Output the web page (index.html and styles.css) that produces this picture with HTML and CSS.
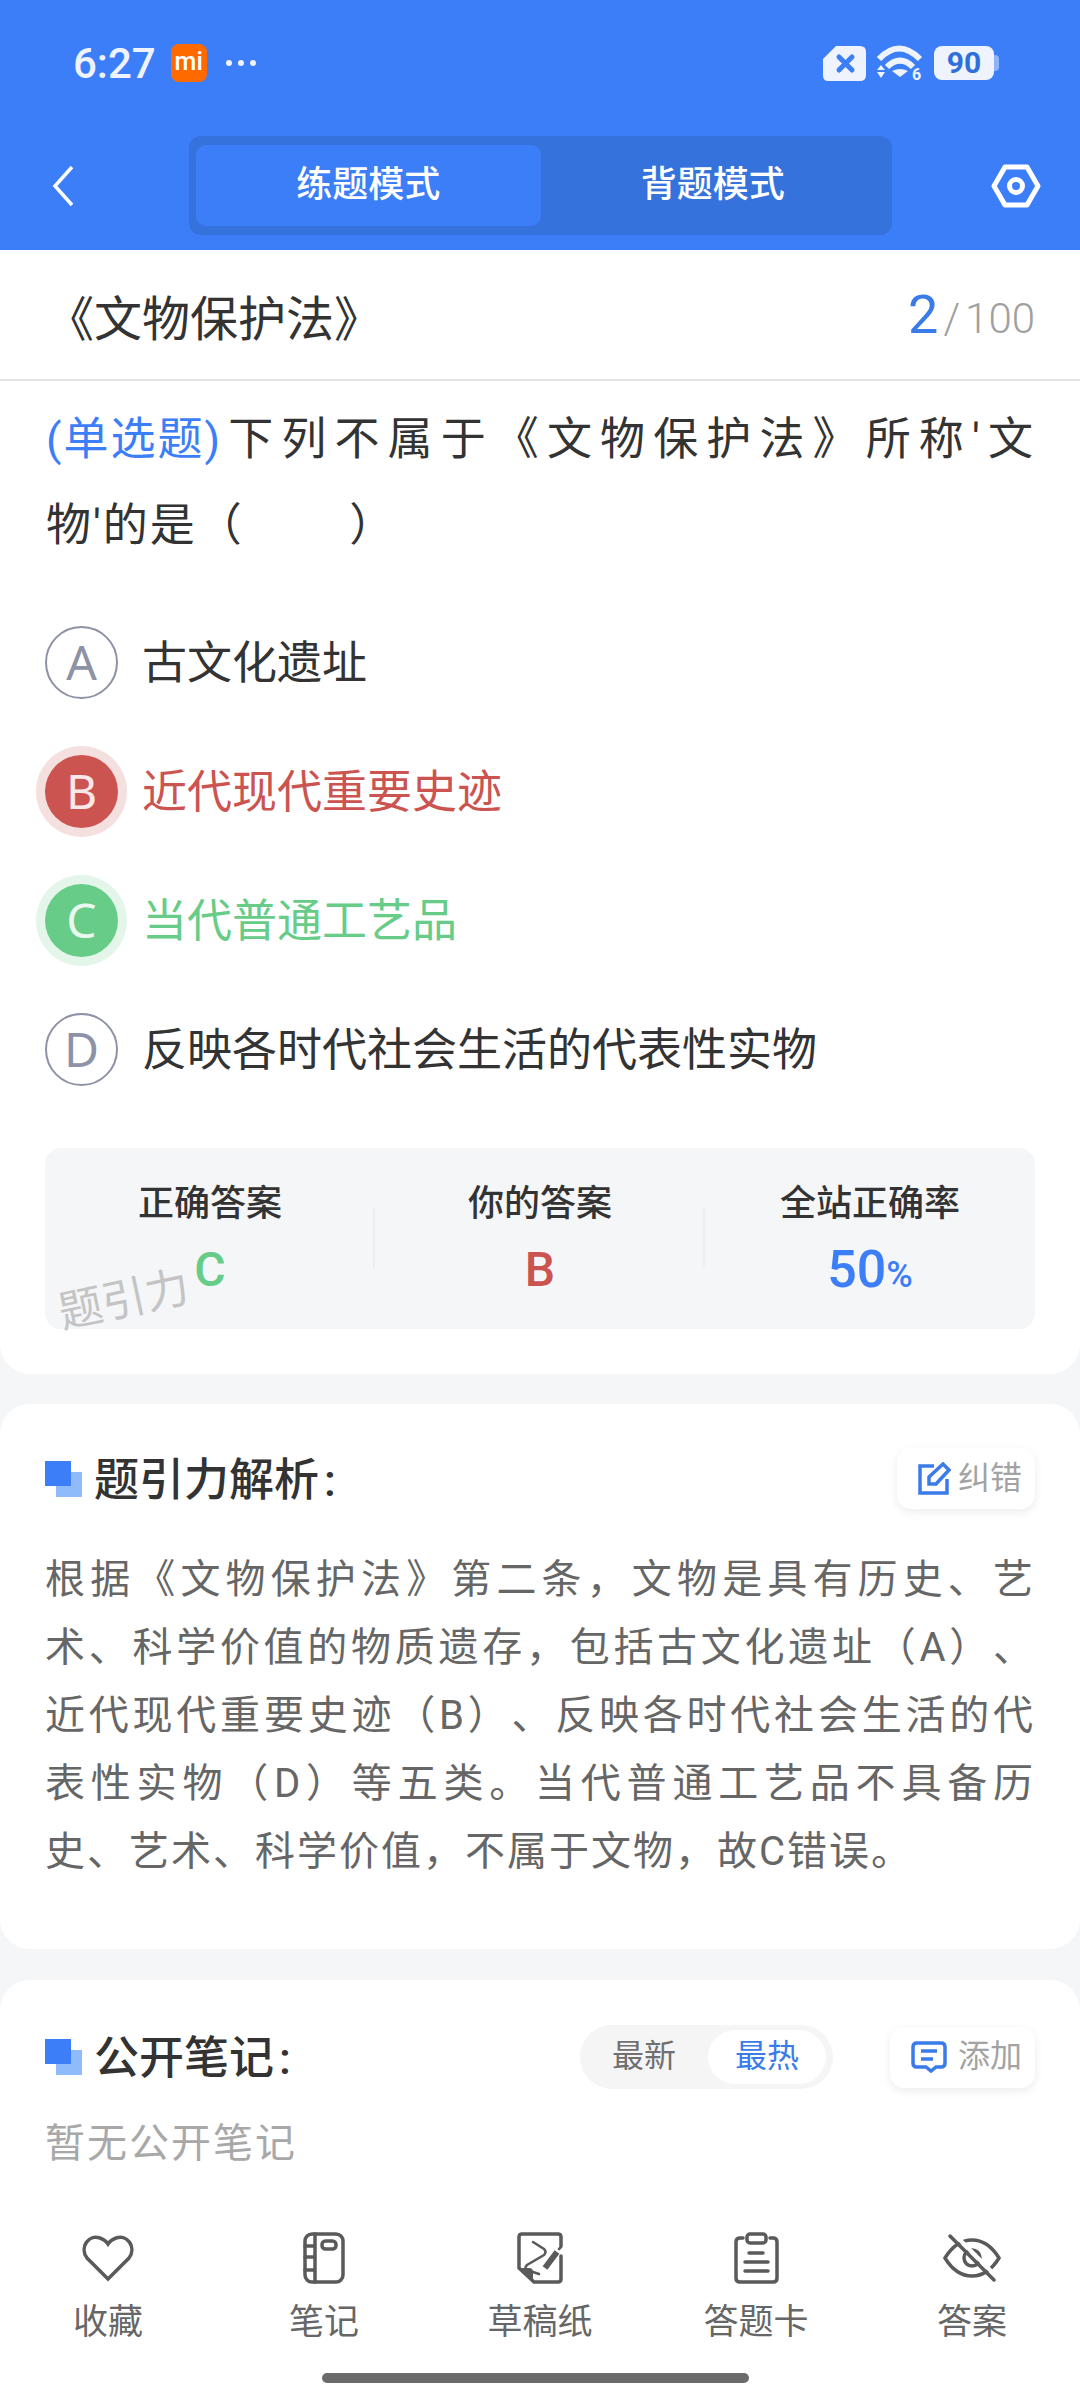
FILE: index.html
```html
<!DOCTYPE html>
<html lang="zh-CN">
<head>
	<meta charset="UTF-8">
	<title>练题模式</title>
	<link rel="stylesheet" href="styles.css">
</head>
<body>
	<header class="top">
		<div class="status">
			<div class="status_left">
				<span class="time">6:27</span>
				<span class="mi">mi</span>
				<svg class="dots" width="32" height="8" viewBox="0 0 32 8"><circle cx="4" cy="4" r="3"/><circle cx="16" cy="4" r="3"/><circle cx="28" cy="4" r="3"/></svg>
			</div>
			<div class="status_right">
				<svg width="43" height="35" viewBox="0 0 43 35"><path class="s_white" d="M13 0H37Q43 0 43 6V29Q43 35 37 35H5Q0 35 0 29V13Z"/><path class="s_x" d="M16 11L29 24M29 11L16 24"/></svg>
				<svg width="48" height="43" viewBox="0 -2 48 43"><path class="s_arc" d="M3 15Q23 -6 44 15"/><path class="s_arc" d="M11 23Q24 10 37 23"/><path class="s_fill" d="M16 27Q24 23 32 27L24 33Z"/><path class="s_fill" d="M1 26H9L5 21ZM1 28H9L5 34Z"/><text class="s_six" x="36" y="36">6</text></svg>
				<div class="battery"><span class="battery_num">90</span></div>
			</div>
		</div>
		<nav class="nav">
			<svg class="back" width="22" height="42" viewBox="0 0 22 42"><path d="M20 2L3 21L20 40"/></svg>
			<div class="mode">
				<span class="mode_item on">练题模式</span>
				<span class="mode_item">背题模式</span>
			</div>
			<svg class="hex" width="50" height="44" viewBox="0 0 50 44"><path d="M14 3H36L47 22L36 41H14L3 22Z"/><circle cx="25" cy="22" r="6.5"/></svg>
		</nav>
	</header>

	<section class="card first">
		<div class="title_row">
			<h1 class="book">《文物保护法》</h1>
			<div class="count"><b>2</b><i>/</i><span>100</span></div>
		</div>
		<p class="question"><span class="qtype">(单选题)</span>下列不属于《文物保护法》所称'文物'的是（&nbsp;&nbsp;&nbsp;&nbsp;&nbsp;&nbsp;&nbsp;&nbsp;）</p>
		<ul class="options">
			<li class="opt"><span class="letter">A</span><span class="opt_text">古文化遗址</span></li>
			<li class="opt wrong"><span class="letter">B</span><span class="opt_text">近代现代重要史迹</span></li>
			<li class="opt right"><span class="letter">C</span><span class="opt_text">当代普通工艺品</span></li>
			<li class="opt"><span class="letter">D</span><span class="opt_text">反映各时代社会生活的代表性实物</span></li>
		</ul>
		<div class="stats">
			<div class="stat"><span class="stat_label">正确答案</span><span class="stat_val green">C</span></div>
			<div class="stat"><span class="stat_label">你的答案</span><span class="stat_val red">B</span></div>
			<div class="stat"><span class="stat_label">全站正确率</span><span class="stat_val blue">50<small>%</small></span></div>
			<span class="mark">题引力</span>
		</div>
	</section>

	<section class="card second">
		<div class="card_head">
			<h2 class="head"><span class="head_icon"></span><span class="head_text">题引力解析<span class="colon">:</span></span></h2>
			<div class="btn">
				<svg width="33" height="33" viewBox="0 0 33 33"><path d="M16 4H2V31H29V17"/><path d="M11 22V15L25 2L31 8L18 22Z"/></svg>
				<span class="btn_text">纠错</span>
			</div>
		</div>
		<p class="analysis">根据《文物保护法》第二条，文物是具有历史、艺术、科学价值的物质遗存，包括古文化遗址（A）、近代现代重要史迹（B）、反映各时代社会生活的代表性实物（D）等五类。当代普通工艺品不具备历史、艺术、科学价值，不属于文物，故C错误。</p>
	</section>

	<section class="card third">
		<div class="card_head">
			<h2 class="head"><span class="head_icon"></span><span class="head_text">公开笔记<span class="colon">:</span></span></h2>
			<div class="head_right">
				<div class="sort"><span class="sort_item">最新</span><span class="sort_item on">最热</span></div>
				<div class="btn btn_add">
					<svg width="36" height="32" viewBox="0 0 36 32"><path d="M6 2H30Q34 2 34 6V22Q34 26 30 26H25L20 30L15 26H6Q2 26 2 22V6Q2 2 6 2Z"/><path d="M10 10H26M10 18H22"/></svg>
					<span class="btn_text">添加</span>
				</div>
			</div>
		</div>
		<p class="empty">暂无公开笔记</p>
	</section>

	<footer class="bottom">
		<ul class="tabs">
			<li class="tab">
				<svg width="52" height="46" viewBox="0 0 52 46"><path d="M26 44L5 23C-3 12 7 -1 18 3C21 4 24 6 26 9C28 6 31 4 34 3C45 -1 55 12 47 23Z"/></svg>
				<span>收藏</span>
			</li>
			<li class="tab">
				<svg width="42" height="52" viewBox="0 0 42 52"><rect x="2" y="2" width="38" height="48" rx="7"/><path d="M12 2V50M2 14H12M2 25H12M2 38H12"/><rect x="19" y="9" width="14" height="8" rx="3.5"/></svg>
				<span>笔记</span>
			</li>
			<li class="tab">
				<svg width="46" height="52" viewBox="0 0 46 52"><path d="M44 14V5Q44 2 41 2H5Q2 2 2 5V36L17 50H41Q44 50 44 47V24"/><path class="solid" d="M2 36H12Q16 36 16 40V50Z"/><path class="thin" d="M16 10L27 17Q30 20 27 23L10 33Q7 36 10 38L22 42"/><path class="pen" d="M28 36L40 20"/><path class="thin" d="M42 17L44 15"/></svg>
				<span>草稿纸</span>
			</li>
			<li class="tab">
				<svg width="45" height="52" viewBox="0 0 45 52"><path d="M9 6H6Q2 6 2 10V46Q2 50 6 50H39Q43 50 43 46V10Q43 6 39 6H36"/><rect x="13" y="2" width="19" height="9" rx="3"/><path d="M15 21H29M11 30H34M11 39H34"/></svg>
				<span>答题卡</span>
			</li>
			<li class="tab">
				<svg width="58" height="48" viewBox="0 0 58 48"><path d="M2 24Q13 6 29 6Q45 6 56 24Q45 42 29 42Q13 42 2 24Z"/><circle cx="29" cy="24" r="8"/><path class="gap" d="M12 1L54 43"/><path d="M7 2L51 46"/></svg>
				<span>答案</span>
			</li>
		</ul>
		<div class="home_bar"></div>
	</footer>
</body>
</html>
```

FILE: styles.css
```css
*{
	margin: 0;
	padding: 0;
	box-sizing: border-box;
}
ul{
	list-style-type: none;
}
body{
	width: 1080px;
	height: 2400px;
	display: flex;
	flex-direction: column;
	overflow: hidden;
	background: #f5f6f8;
	color: #333;
	font-family: Roboto, "Noto Sans CJK SC", sans-serif;
	text-spacing-trim: space-all;
}

/* top blue area */
.top{
	height: 250px;
	flex: none;
	background: #3c7ef8;
}
.status{
	height: 126px;
	display: flex;
	align-items: center;
	justify-content: space-between;
	padding: 0 86px 0 73px;
}
.status_left,.status_right{
	display: flex;
	align-items: center;
}
.time{
	font-size: 42px;
	font-weight: 500;
	color: #eef3fe;
}
.mi{
	width: 36px;
	height: 38px;
	margin-left: 15px;
	border-radius: 8px;
	background: #ff6a00;
	color: #fff;
	font-size: 25px;
	font-weight: 500;
	line-height: 36px;
	text-align: center;
}
.dots{
	margin-left: 18px;
	fill: #eef3fe;
}
.status_right{
	gap: 10px;
}
.s_white{
	fill: #eef3fe;
}
.s_x{
	fill: none;
	stroke: #3c7ef8;
	stroke-width: 5;
	stroke-linecap: round;
}
.s_arc{
	fill: none;
	stroke: #eef3fe;
	stroke-width: 6;
}
.s_fill{
	fill: #eef3fe;
}
.s_six{
	fill: #eef3fe;
	font-size: 16px;
	font-weight: 700;
}
.battery{
	position: relative;
	width: 60px;
	height: 34px;
	border-radius: 8px;
	background: #eef3fe;
	color: #2f6fdc;
	font-size: 30px;
	font-weight: 700;
	line-height: 34px;
	text-align: center;
}
.battery:after{
	content: "";
	position: absolute;
	right: -5px;
	top: 9px;
	width: 5px;
	height: 16px;
	border-radius: 0 4px 4px 0;
	background: #8db4fb;
}
.nav{
	height: 99px;
	margin-top: 10px;
	display: flex;
	align-items: center;
	padding: 0 39px 0 52px;
}
.back path{
	fill: none;
	stroke: #fff;
	stroke-width: 3.5;
}
.hex{
	margin-left: auto;
}
.hex path,.hex circle{
	fill: none;
	stroke: #fff;
	stroke-width: 5;
	stroke-linejoin: round;
}
.mode{
	width: 703px;
	height: 99px;
	margin-left: 115px;
	padding: 9px 7px;
	display: flex;
	border-radius: 12px;
	background: #3672dc;
}
.mode_item{
	flex: 1;
	border-radius: 10px;
	color: #fff;
	font-size: 36px;
	font-weight: 500;
	line-height: 81px;
	text-align: center;
}
.mode_item.on{
	background: #3c7ef8;
}

/* cards */
.card{
	flex: none;
	background: #fff;
}
.first{
	padding-bottom: 45px;
	border-radius: 0 0 30px 30px;
}
.second{
	margin-top: 30px;
	padding: 44px 45px 63px 45px;
	border-radius: 30px;
}
.third{
	flex: 1;
	margin-top: 31px;
	padding: 45px 45px 0 45px;
	border-radius: 30px 30px 0 0;
}
.title_row{
	height: 131px;
	display: flex;
	align-items: center;
	justify-content: space-between;
	padding: 0 45px 0 46px;
	border-bottom: 2px solid #e2e2e2;
}
.book{
	font-size: 48px;
	font-weight: 400;
}
.count{
	display: flex;
	align-items: baseline;
	color: #a0a0a0;
	font-size: 42px;
	font-weight: 300;
}
.count b{
	color: #3a7bea;
	font-size: 54px;
	font-weight: 400;
}
.count i{
	margin: 0 5px;
	font-style: normal;
}
.question{
	padding: 16px 45px 0 46px;
	font-size: 45px;
	letter-spacing: 2px;
	line-height: 86px;
	text-align: justify;
}
.qtype{
	display: inline-block;
	color: #3c7ef8;
}
.options{
	margin-top: 29px;
	padding-left: 45px;
}
.opt{
	height: 129px;
	display: flex;
	align-items: center;
	gap: 24px;
	font-size: 45px;
}
.opt_text{
	margin-top: -6px;
}
.letter{
	width: 73px;
	height: 73px;
	flex: none;
	border: 2px solid #8e92a6;
	border-radius: 50%;
	color: #8e92a6;
	font-family: "Noto Sans", sans-serif;
	font-size: 48px;
	line-height: 68px;
	text-align: center;
}
.wrong{
	color: #cb5450;
}
.wrong .letter{
	border: none;
	background: #cb5450;
	box-shadow: 0 0 0 9px #f5e0e0;
	color: #fae8e8;
	line-height: 72px;
}
.right{
	color: #66cc88;
}
.right .letter{
	border: none;
	background: #66cc88;
	box-shadow: 0 0 0 9px #e4f6ea;
	color: #e8f8ee;
	line-height: 72px;
}
.stats{
	position: relative;
	height: 181px;
	margin: 34px 45px 0 45px;
	display: flex;
	border-radius: 16px;
	background: #f5f6f8;
}
.stat{
	position: relative;
	flex: 1;
	display: flex;
	flex-direction: column;
	align-items: center;
	padding-top: 31px;
}
.stat + .stat:before{
	content: "";
	position: absolute;
	left: -2px;
	top: 60px;
	width: 2px;
	height: 59px;
	background: #eceef1;
}
.stat_label{
	color: #333;
	font-size: 36px;
	font-weight: 500;
	line-height: 50px;
}
.stat_val{
	height: 56px;
	margin-top: 13px;
	font-size: 48px;
	font-weight: 500;
	line-height: 56px;
}
.stat_val.blue{
	font-size: 52px;
}
.stat_val small{
	font-size: 36px;
}
.green{
	color: #66cc88;
}
.red{
	color: #cb5450;
}
.blue{
	color: #3c7ef8;
}
.mark{
	position: absolute;
	left: 12px;
	top: 116px;
	color: #c4c4c4;
	font-size: 44px;
	font-weight: 400;
	transform: rotate(-12deg);
}
.card_head{
	display: flex;
	align-items: center;
	justify-content: space-between;
}
.head{
	display: flex;
	align-items: center;
	color: #333;
	font-size: 45px;
	font-weight: 500;
}
.head_text{
	margin-top: -5px;
}
.head_icon{
	position: relative;
	width: 37px;
	height: 36px;
	margin-right: 12px;
}
.head_icon:before,.head_icon:after{
	content: "";
	position: absolute;
	width: 26px;
	height: 25px;
}
.head_icon:before{
	right: 0;
	bottom: 0;
	background: #90bbfb;
}
.head_icon:after{
	left: 0;
	top: 0;
	background: #3c7ef8;
}
.colon{
	margin-left: 5px;
}
.btn{
	height: 61px;
	display: flex;
	align-items: center;
	gap: 7px;
	padding: 0 13px 0 21px;
	border-radius: 14px;
	background: #fff;
	box-shadow: 0 3px 10px rgba(0,0,0,.08);
	color: #a3a3a3;
	font-size: 32px;
}
.btn_add{
	gap: 11px;
}
.btn_text{
	margin-top: -8px;
}
.btn svg{
	fill: none;
	stroke: #3a7bea;
	stroke-width: 3.5;
}
.analysis{
	margin-top: 37px;
	color: #666;
	font-size: 40px;
	letter-spacing: 2px;
	line-height: 68px;
	text-align: justify;
}
.head_right{
	display: flex;
	align-items: center;
	gap: 57px;
}
.sort{
	width: 253px;
	height: 64px;
	padding: 5px 7px 5px 0;
	display: flex;
	border-radius: 32px;
	background: #f5f5f5;
	font-size: 32px;
	line-height: 52px;
	text-align: center;
}
.sort_item{
	flex: 1;
	color: #707070;
	border-radius: 27px;
}
.sort_item.on{
	flex: none;
	width: 118px;
	background: #fff;
	color: #3a7bea;
}
.empty{
	margin-top: 25px;
	color: #a8a8a8;
	font-size: 40px;
	letter-spacing: 2px;
	line-height: 60px;
}

/* bottom tabs */
.bottom{
	height: 210px;
	flex: none;
	padding-top: 40px;
	background: #fff;
}
.tabs{
	display: grid;
	grid-template-columns: repeat(5,216px);
}
.tab{
	display: flex;
	flex-direction: column;
	align-items: center;
	color: #666;
	font-size: 35px;
	line-height: 40px;
}
.tab svg{
	height: 56px;
	margin-bottom: 17px;
	fill: none;
	stroke: #5a5a5a;
	stroke-width: 3.5;
	stroke-linecap: round;
}
.tab .solid{
	fill: #5a5a5a;
	stroke: none;
}
.tab .thin{
	stroke-width: 2.5;
}
.tab .pen{
	stroke-width: 6;
	stroke-linecap: butt;
}
.tab .gap{
	stroke: #fff;
	stroke-width: 4;
}
.home_bar{
	width: 427px;
	height: 10px;
	margin: 30px 0 0 322px;
	border-radius: 5px;
	background: #6b6b6b;
}
```
